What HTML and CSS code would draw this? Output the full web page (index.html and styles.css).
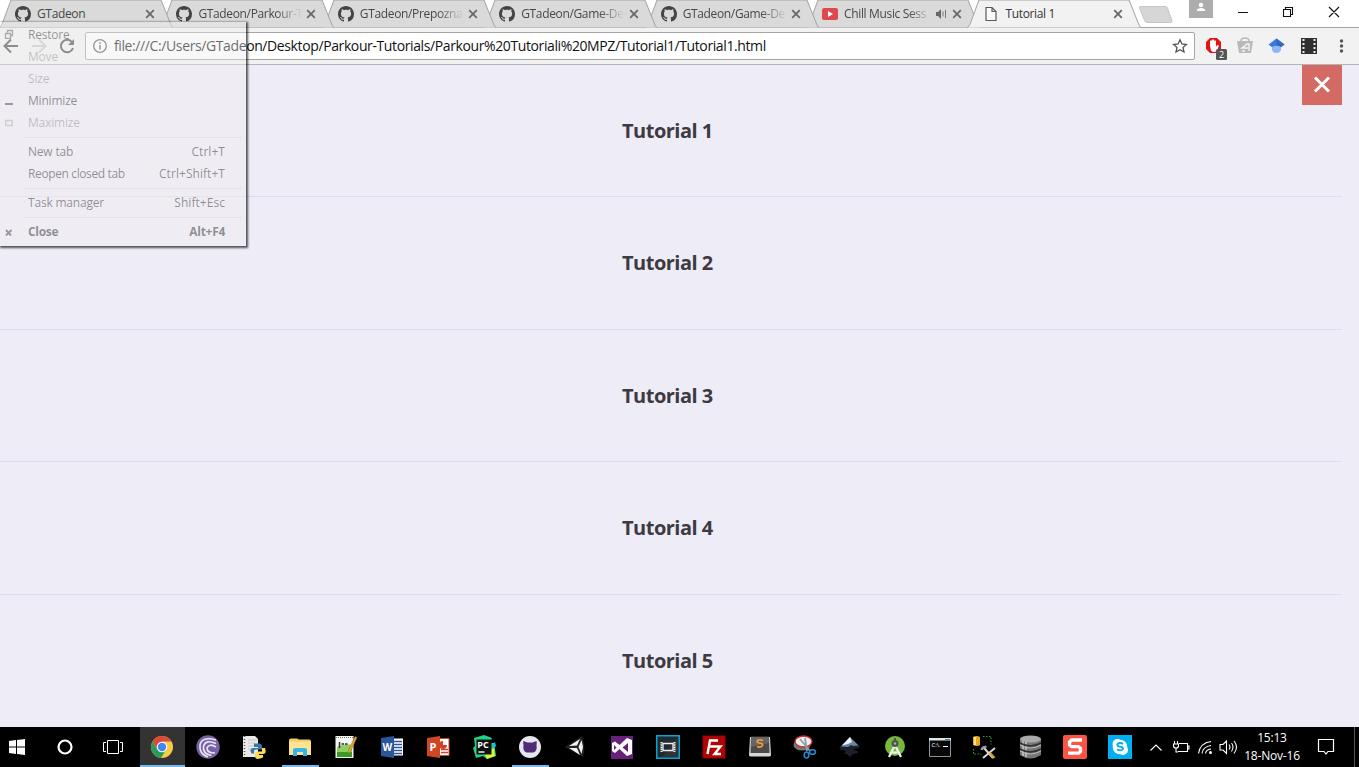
FILE: index.html
```html
<!DOCTYPE html>
<html lang="en">
<head>
<meta charset="utf-8">
<title>Tutorial 1</title>
<link rel="stylesheet" href="styles.css">
</head>
<body>
<svg class="defs" width="0" height="0">
  <symbol id="shape" viewBox="0 0 174 28"><path d="M0 27.5C2 27 2.500 25 3.500 23L12 0H162L172 25Q173 27.500 174 27.500" stroke="#a3a3a3"/></symbol>
  <symbol id="octo" viewBox="0 0 16 16"><path fill="#444" d="M8 0C3.58 0 0 3.58 0 8c0 3.54 2.29 6.53 5.47 7.59.4.07.55-.17.55-.38 0-.19-.01-.82-.01-1.49-2.01.37-2.53-.49-2.69-.94-.09-.23-.48-.94-.82-1.13-.28-.15-.68-.52-.01-.53.63-.01 1.08.58 1.23.82.72 1.21 1.87.87 2.33.66.07-.52.28-.87.51-1.07-1.78-.2-3.64-.89-3.64-3.95 0-.87.31-1.59.82-2.15-.08-.2-.36-1.02.08-2.12 0 0 .67-.21 2.2.82.64-.18 1.32-.27 2-.27.68 0 1.36.09 2 .27 1.53-1.04 2.2-.82 2.2-.82.44 1.1.16 1.92.08 2.12.51.56.82 1.27.82 2.15 0 3.07-1.87 3.75-3.65 3.95.29.25.54.73.54 1.48 0 1.07-.01 1.93-.01 2.2 0 .21.15.46.55.38A8.013 8.013 0 0016 8c0-4.42-3.58-8-8-8z"/></symbol>
  <symbol id="x" viewBox="0 0 10 10"><path d="M1.200 1.200l7.600 7.600M8.800 1.200l-7.600 7.600" stroke="#666" stroke-width="1.700"/></symbol>
</svg>

<header class="browser">
  <div class="strip">
    <div class="tab t0"><svg class="shape"><use href="#shape"/></svg><svg class="fav"><use href="#octo"/></svg><span class="title">GTadeon</span><svg class="close"><use href="#x"/></svg></div>
    <div class="tab t1"><svg class="shape"><use href="#shape"/></svg><svg class="fav"><use href="#octo"/></svg><span class="title fade">GTadeon/Parkour-T</span><svg class="close"><use href="#x"/></svg></div>
    <div class="tab t2"><svg class="shape"><use href="#shape"/></svg><svg class="fav"><use href="#octo"/></svg><span class="title fade">GTadeon/Prepozna</span><svg class="close"><use href="#x"/></svg></div>
    <div class="tab t3"><svg class="shape"><use href="#shape"/></svg><svg class="fav"><use href="#octo"/></svg><span class="title fade">GTadeon/Game-De</span><svg class="close"><use href="#x"/></svg></div>
    <div class="tab t4"><svg class="shape"><use href="#shape"/></svg><svg class="fav"><use href="#octo"/></svg><span class="title fade">GTadeon/Game-De</span><svg class="close"><use href="#x"/></svg></div>
    <div class="tab t5"><svg class="shape"><use href="#shape"/></svg>
      <svg class="fav" viewBox="0 0 16 16"><rect y="2" width="16" height="12" rx="2" fill="#dc4a50"/><path d="M6 5l5 3-5 3z" fill="#fff"/></svg>
      <span class="title fade">Chill Music Sess</span>
      <svg class="audio" viewBox="0 0 11 10"><path d="M0 3h2l3-3v10L2 7H0z" fill="#666"/><path d="M7 2.500v5M9.500 1v8" stroke="#777"/></svg>
      <svg class="close"><use href="#x"/></svg></div>
    <div class="tab active"><svg class="shape"><use href="#shape"/></svg>
      <svg class="fav" viewBox="0 0 16 16"><path d="M3.500 1.500h6l4 4v9h-10zM9.500 1.500v4h4" transform="translate(-.500 0)" fill="#fafafa" stroke="#5a5a5a" stroke-width="1.200"/></svg>
      <span class="title">Tutorial 1</span><svg class="close"><use href="#x"/></svg></div>
    <svg class="newtab" viewBox="0 0 36 18"><path d="M3 .5h24.500q1.500 0 2 1.500l4.500 12.500q.500 2-1.500 2H9q-1.500 0-2.200-1.500L1.500 2Q1 .5 3 .5z" fill="#d6d6d6" stroke="#c6c6c6"/></svg>
    <div class="window">
      <svg class="user" viewBox="0 0 24 18"><path fill="#adadad" d="M0 0h24v18H0z"/><circle cx="12" cy="5" r="2.200" fill="#fff"/><path d="M8 11V9.800Q8.500 8 12 8t4 1.800V11z" fill="#fff"/></svg>
      <svg class="controls" viewBox="0 0 110 24"><path d="M8 12.500h10M53.500 9.500h7v7h-7zM55.500 9.500v-2h7v7h-2M99 7l10 10M109 7L99 17" fill="none" stroke="#111" stroke-width="1.100"/></svg>
    </div>
  </div>
  <div class="toolbar">
    <svg class="nav" viewBox="0 0 85 36"><path d="M18 18H5.500M11 11.500L4.500 18l6.500 6.500" fill="none" stroke="#4e4e4e" stroke-width="2"/><path d="M32 18h12.500M39 11.500l6.500 6.500-6.500 6.500" fill="none" stroke="#c6c6c6" stroke-width="2"/><path d="M72 14.200A6.200 6.200 0 1 0 73 20" fill="none" stroke="#4e4e4e" stroke-width="2"/><path d="M74 11v6h-6z" fill="#4e4e4e"/></svg>
    <div class="address">
      <svg class="info" viewBox="0 0 16 16"><circle cx="8" cy="8" r="6.300" fill="none" stroke="#5e5e5e" stroke-width="1.300"/><path d="M8 7v4.500M8 4.300v1.600" stroke="#5e5e5e" stroke-width="1.500"/></svg>
      <span class="url">file:///C:/Users/GTadeon/Desktop/Parkour-Tutorials/Parkour%20Tutoriali%20MPZ/Tutorial1/Tutorial1.html</span>
      <svg class="star" viewBox="0 0 16 16"><path d="M8 1.800l1.900 4.200 4.500.500-3.400 3 1 4.500L8 11.700 4 14l1-4.500-3.400-3 4.500-.5z" fill="none" stroke="#555" stroke-width="1.300"/></svg>
    </div>
    <svg class="extensions" viewBox="0 0 164 36">
      <path d="M15 10h7l4 4v7l-4 4h-7l-4-4v-7z" fill="#e21414"/><path d="M15 18v-5q1-1.500 2 0v-1q1-1.500 2 0v1q1-1.500 2 0v6l1-2 2 .5-2 5q-3 3-6 0z" fill="#fff"/><rect x="21" y="21" width="11" height="11" rx="1.500" fill="#555"/><text x="24" y="30" font-size="9" fill="#fff">2</text>
      <path d="M42 13h16l-2 12H44z" fill="#b9b9b9"/><path d="M46 13q0-3 4-3t4 3" fill="none" stroke="#b9b9b9" stroke-width="1.500"/><path d="M51 16h3v7M52 16l-5 4h6M47 23h3" fill="none" stroke="#f4f4f4" stroke-width="1.400"/>
      <path d="M81.500 10.500l8 6-8 6-8-6z" fill="#3c78df"/><path d="M81.500 10.500l8 6-8 6z" fill="#3469bd"/><path d="M77 19q4.500-2.500 9 0v3q-1 3-4.500 3T77 22z" fill="#8fb6f5"/>
      <path d="M106 10h16v16h-16z" fill="#303030"/><path d="M108.500 11v14M119.500 11v14" stroke="#ececec" stroke-width="2" stroke-dasharray="2 2"/>
      <g fill="#555"><circle cx="146.500" cy="13" r="1.700"/><circle cx="146.500" cy="18" r="1.700"/><circle cx="146.500" cy="23" r="1.700"/></g>
    </svg>
  </div>
</header>

<main class="page">
  <ul class="lessons">
    <li>Tutorial 1</li><li>Tutorial 2</li><li>Tutorial 3</li><li>Tutorial 4</li><li>Tutorial 5</li>
  </ul>
  <button class="dismiss" aria-label="Close"><svg viewBox="0 0 40 40"><path d="M13 12.500l14 14M27 12.500l-14 14" stroke="#fff" stroke-width="3"/></svg></button>
</main>

<footer class="taskbar">
  <div class="sys first"><svg viewBox="0 0 24 24"><path fill="#fff" d="M4 6l7-1v6.500H4zM12 4.900L20 4v7.500h-8zM4 12.500h7V19l-7-1zM12 12.500h8V20l-8-1z"/></svg></div>
  <div class="sys"><svg viewBox="0 0 24 24"><circle cx="12" cy="12" r="6.500" fill="none" stroke="#fff" stroke-width="2.200"/></svg></div>
  <div class="sys"><svg viewBox="0 0 24 24"><path fill="none" stroke="#fff" d="M6.500 5.500h11v13h-11zM5 7.500H2.500v9H5M19 7.500h2.500v9H19"/></svg></div>
  <div class="apps">
    <div class="app current"><svg viewBox="0 0 24 24"><circle cx="12" cy="12" r="11" fill="#f8cb45"/><path d="M2.500 6.500A11 11 0 0 1 21.500 6.500H12L7 14z" fill="#da4a3c"/><path d="M2.500 6.500A11 11 0 0 0 11 23l5.500-9L7 14z" fill="#2a9b5a"/><circle cx="12" cy="12" r="5.300" fill="#fff"/><circle cx="12" cy="12" r="4.200" fill="#4285f4"/></svg></div>
    <div class="app"><svg viewBox="0 0 24 24"><circle cx="12" cy="12" r="11.700" fill="#7662a5"/><path d="M20 5Q6 1 4 10q-1 9 8 12M20 8.500Q10 4 7.500 11q-1 8 8 9.500M20 12q-7-4-9 1 0 5 8 5" fill="none" stroke="#e9e5f2" stroke-width="1.700"/></svg></div>
    <div class="app"><svg viewBox="0 0 24 24"><path d="M1 1h12l3 3v18H1z" fill="#e9e9e9"/><path d="M2.500 1v21" stroke="#555" stroke-width="1.500" stroke-dasharray="1 2"/><path d="M6 5h9M6 8h7M6 11h6M6 14h4" stroke="#c8c8c8"/><path d="M12 8.500h5q3 0 3 3v3h-6q-2 0-2 2v2H9.500Q7 14 10.500 13H16v-1h-4z" fill="#3878a6"/><path d="M20 13h3q2 6-2 6h-4v1h4v2.500q-7 3-8-.5v-3.500q0-2 3-2h4z" fill="#ffdc52"/></svg></div>
    <div class="app open"><svg viewBox="0 0 24 24"><path d="M1 5q0-1.500 2-1.500h6l2 1h10q2 0 2 2V20H1z" fill="#f2cb68"/><path d="M1 6.500h22V20H1z" fill="#ffe391"/><path d="M5 21v-7l2-1h10l2 1v7h-4v-4H9v4z" fill="#38b5e8"/></svg></div>
    <div class="app"><svg viewBox="0 0 24 24"><path d="M1.500 1h18v22h-18z" fill="#f4f6f1"/><path d="M3 12q8-4 15-2v12H3z" fill="#8fce62"/><path d="M3 17h15v5H3z" fill="#3b9a24"/><path d="M2 2.500h17" stroke="#777" stroke-dasharray="1 1"/><path d="M5.500 7v6M7.500 9h2.500M11 9h2.500" stroke="#333" stroke-width="1.500"/><path d="M21 1.500l2 1-7 15-2 1v-2z" fill="#e5a836" stroke="#8b6522" stroke-width=".5"/></svg></div>
    <div class="app"><svg viewBox="0 0 24 24"><path d="M12 3.500h11v17H12z" fill="#fff"/><path d="M14 6.500h8M14 9.500h8M14 12.500h8M14 15.500h8M14 18.500h8" stroke="#2b579a" stroke-width="1.300"/><path d="M1 3l13-2v22L1 21z" fill="#2b579a"/><text x="2.500" y="16" font-size="10" font-weight="700" fill="#fff">W</text></svg></div>
    <div class="app"><svg viewBox="0 0 24 24"><path d="M12 3.500h11v17H12z" fill="#fff" stroke="#d04525"/><path d="M15 14.500h7M15 17.500h7" stroke="#d04525" stroke-width="1.500"/><path d="M17 6a4 4 0 1 0 4 4h-4z" fill="#d04525"/><path d="M1 3l13-2v22L1 21z" fill="#d04525"/><text x="3.500" y="16" font-size="11" font-weight="700" fill="#fff">P</text></svg></div>
    <div class="app"><svg viewBox="0 0 24 24"><path d="M2 3l10-3 8 3-2 5 4 0 2 13-9 3-4-3-7 2-3-10 2-2z" fill="#20d58a"/><path d="M20 10l3-3 1 4-2 2z" fill="#07c3f2"/><path d="M12 18l10-5 1 8-8 3z" fill="#d8f535"/><path d="M4.500 4.500h15v15h-15z" fill="#111"/><text x="5.300" y="12.500" font-size="9" font-weight="700" fill="#fff">PC</text><path d="M6.500 17h6" stroke="#fff" stroke-width="1.400"/></svg></div>
    <div class="app open"><svg viewBox="0 0 24 24"><circle cx="12" cy="12" r="11" fill="#e6e6ee"/><path d="M5.500 6l4 1.500h5l4-1.500q.5 2 0 4 1 6-3 7.500H8.500Q4.500 16 5.500 10q-.7-2 0-4z" fill="#512c76"/></svg></div>
    <div class="app"><svg viewBox="0 0 24 24"><path d="M1 12L18 1q4 11 1 21z" fill="#222"/><path d="M5 11l11-7-3 6.500zM17.500 5l1.500 7-1.500 7-3-7zM5 13h8l3 7z" fill="#f2f2ef"/></svg></div>
    <div class="app"><svg viewBox="0 0 24 24"><path d="M1 1h22v23H1z" fill="#68217a"/><path d="M2 8l3-1.500 4.500 3.500L17 3l5 2v14l-5 2-7.500-7L5 18l-3-2zM4 10v5l2.500-2.500zM12.500 12.500L18 17V8z" fill="#fff" fill-rule="evenodd"/></svg></div>
    <div class="app"><svg viewBox="0 0 24 24"><path d="M.75.75h22.500v22.500H.75z" fill="#202a30" stroke="#0aa2cf" stroke-width="1.500"/><path d="M22 2v20H6z" fill="#303235"/><path d="M5.500 7v10M18.500 7v10" stroke="#eee" stroke-width="2" stroke-dasharray="1.500 .7"/><path d="M7 8.500h10v7H7z" fill="none" stroke="#eee" stroke-width="1.300"/></svg></div>
    <div class="app"><svg viewBox="0 0 24 24"><path d="M.75.75h22.500v22.500H.75z" fill="#b00507" stroke="#760000" stroke-dasharray="1.500 1"/><path d="M5.500 19L8 5.500h8M6.500 11.500h6M12 11.500h6.500L12.500 19H19" fill="none" stroke="#fff" stroke-width="2.400"/></svg></div>
    <div class="app"><svg viewBox="0 0 24 24"><path d="M2 2h20l1 18q0 1.500-2 1.500H3q-2 0-2-1.500z" fill="#d7d7d7"/><path d="M3 1.500h18l.5 16.500h-19z" fill="#4b4b4b"/><path d="M3 2h18v6L3 12z" fill="#666"/><path d="M15 5.500q-3-1.500-5.500 0-1 2 1.500 2.500 4 0 3.500 2.500-2 2.500-5.500 1" fill="none" stroke="#ff9d35" stroke-width="1.700"/></svg></div>
    <div class="app small"><svg viewBox="0 0 24 24"><ellipse cx="9" cy="10" rx="8.500" ry="5.500" fill="#777"/><ellipse cx="10.500" cy="6.500" rx="8.500" ry="5.500" fill="#f1f1f1" stroke="#c22a2e" stroke-width="1.300"/><path d="M7 4l10 12M12 3l2 13" stroke="#929da5" stroke-width="1.800"/><ellipse cx="13.500" cy="20" rx="2.300" ry="3" fill="none" stroke="#208ad0" stroke-width="1.600"/><ellipse cx="19.500" cy="17" rx="3" ry="2.300" fill="none" stroke="#208ad0" stroke-width="1.600"/></svg></div>
    <div class="app small"><svg viewBox="0 0 24 24"><path d="M12 1.500l10 10q0 1.500-3 2l-4 .5 3 2q3 0 2 2l-5 1-3 3-3-3-3-.5 2-2.500-5-1q-2-1-1-3.500z" fill="#1c222c"/><path d="M12 2l8.500 8.500-5.500.5-2-1-3 2-7-.5z" fill="#6985a4"/><path d="M12 2l2 5-4 2-6 1.500z" fill="#f1f4f7"/></svg></div>
    <div class="app small"><svg viewBox="0 0 24 24"><circle cx="12" cy="11" r="10" fill="#78b83f"/><path d="M12 10L6 22M12 10l6 12M8 16.500q4 2.500 8 0" fill="none" stroke="#eee" stroke-width="2.300"/><circle cx="12" cy="8.500" r="3.500" fill="#4c574e"/><circle cx="12" cy="8.500" r="1.300" fill="#9eb39b"/><path d="M12 3v3" stroke="#4c574e" stroke-width="2"/></svg></div>
    <div class="app small"><svg viewBox="0 0 24 24"><path d="M1.500 3.500h21v18h-21z" fill="#080808" stroke="#8e959a"/><path d="M1 3h22v2.500H1z" fill="#dce5e9"/><path d="M17 4.500h5" stroke="#58849b"/><text x="3.500" y="12" font-size="6" fill="#fff">C:\.</text><path d="M15 11.500h5" stroke="#fff"/></svg></div>
    <div class="app small"><svg viewBox="0 0 24 24"><path d="M0 2q3.500-2 7 0v8q-3 2-7 0z" fill="#e5ac22"/><path d="M2 2v8" stroke="#ffe083" stroke-width="2"/><path d="M10 1.500h8v8M.5 14v5h8" fill="none" stroke="#35a92e" stroke-dasharray="1.500 1.500"/><path d="M11 13l9 10M22 13L10 23" stroke="#d9d9d2" stroke-width="2"/><path d="M17 18l4.500 5" stroke="#cf9d3b" stroke-width="2.500"/><path d="M8.500 15q1-3.500 5-3" fill="none" stroke="#9aa0a5" stroke-width="2.500"/></svg></div>
    <div class="app small"><svg viewBox="0 0 24 24"><path d="M2 4v16q10 7 21 0V4z" fill="#777"/><path d="M5 4v17M8 5v17" stroke="#b5b5b5" stroke-width="2"/><path d="M2 8q10 6 21 0M2 14q10 6 21 0" fill="none" stroke="#303030" stroke-width="1.500"/><path d="M2 10q10 6 21 0M2 16q10 6 21 0" fill="none" stroke="#bcbcbc"/><ellipse cx="12.500" cy="4" rx="10.500" ry="3.500" fill="#aaa"/></svg></div>
    <div class="app small"><svg viewBox="0 0 24 24"><rect width="24" height="24" rx="2" fill="#fb5445"/><path d="M19 5H8.500L6.500 7v3l2 1.700h7l2 1.700v3l-2 1.800H5" fill="none" stroke="#fff" stroke-width="3.300"/></svg></div>
    <div class="app small"><svg viewBox="0 0 24 24"><path fill="#00aff0" d="M0 0h24v24H0z"/><circle cx="9.500" cy="9" r="5" fill="#fff"/><circle cx="15" cy="15" r="5" fill="#fff"/><circle cx="12" cy="12" r="7.300" fill="#fff"/><path d="M15 9q-3-2-5.500 0-1 2 2 2.600 4 .4 3.500 2.400-2 2.500-6 .5" fill="none" stroke="#00aff0" stroke-width="1.900"/></svg></div>
  </div>
  <svg class="tray" viewBox="0 0 96 40"><g fill="none" stroke="#fff" stroke-width="1.100"><path d="M8.500 23.500l5.500-5.500 5.500 5.500"/><path d="M37 16.500h8.500v8H36M45.500 19h1.500v3h-1.500M32.500 14v3M35.500 14v3M31.500 17h5v2q0 2-2.500 2t-2.500-2zM34 21v4h2"/><path d="M56.500 26.500Q58 16 69 14.500M60 26.500q1-7 9-8M63.500 26.500q.5-4 5.500-4.500"/><path d="M78 17.500h3l3.500-3.500v12.500L81 23h-3zM87 17.500q2 2.500 0 5M89.500 16q3 4 0 8.500M92 14q5 6 0 12.500"/></g><circle cx="68.500" cy="25.500" r="1.500" fill="#fff"/></svg>
  <div class="clock"><span>15:13</span><span>18-Nov-16</span></div>
  <svg class="notice" viewBox="0 0 24 40"><path d="M4.500 12.500h15v12H14L12 27l-2-2.500H4.500z" fill="none" stroke="#fff" stroke-width="1.200"/></svg>
  <div class="peek"></div>
</footer>

<nav class="menu">
  <div class="item"><svg viewBox="0 0 10 10"><path d="M1.500 4.500h5v5h-5zM3.500 3.500v-2h5v5H7" fill="none" stroke="#555" stroke-width="1.300"/></svg><span>Restore</span></div>
  <div class="item off"><svg></svg><span>Move</span></div>
  <div class="item off"><svg></svg><span>Size</span></div>
  <div class="item"><svg viewBox="0 0 10 10"><path d="M1 9h8" stroke="#333" stroke-width="2"/></svg><span>Minimize</span></div>
  <div class="item off"><svg viewBox="0 0 10 10"><path d="M1.700 3.500h6.500v5H1.700z" fill="none" stroke="#555" stroke-width="1.500"/></svg><span>Maximize</span></div>
  <hr>
  <div class="item"><svg></svg><span>New tab</span><kbd>Ctrl+T</kbd></div>
  <div class="item"><svg></svg><span class="tight">Reopen closed tab</span><kbd>Ctrl+Shift+T</kbd></div>
  <hr>
  <div class="item"><svg></svg><span>Task manager</span><kbd>Shift+Esc</kbd></div>
  <hr>
  <div class="item strong"><svg viewBox="0 0 10 10"><path d="M2 4l5 5.500M7.500 4L2 9.500" stroke="#333" stroke-width="1.900"/></svg><span>Close</span><kbd>Alt+F4</kbd></div>
</nav>
</body>
</html>
```
FILE: styles.css
```css
* { box-sizing: border-box; }
html, body { height: 100%; }
body { margin: 0; overflow: hidden; display: flex; flex-direction: column; position: relative; font-family: "Open Sans", "Noto Sans", sans-serif; background: #eeecf6; }
svg { display: block; flex: none; }
.defs { position: absolute; }

.browser { flex: none; height: 65px; border-bottom: 1px solid #b3b3ba; background: #f2f2f2; }
.strip { height: 28px; display: flex; background: #fff; border-bottom: 1px solid #a3a3a3; position: relative; }
.tab { position: relative; flex: none; width: 174px; height: 28px; margin-right: -12.6px; display: flex; align-items: center; padding: 0 18px 1px 16px; font-size: 12px; color: #484848; }
.tab:first-child { margin-left: -1px; }
.shape { position: absolute; left: 0; top: 0; width: 174px; height: 28px; fill: #dadada; z-index: -1; }
.t0 { z-index: 7; } .t1 { z-index: 6; } .t2 { z-index: 5; } .t3 { z-index: 4; } .t4 { z-index: 3; } .t5 { z-index: 2; }
.active { z-index: 8; color: #333; }
.active .shape { fill: #f2f2f2; }
.fav { width: 16px; height: 16px; margin-right: 6px; }
.title { flex: 1; overflow: hidden; white-space: nowrap; letter-spacing: -.35px; margin-right: 4px; }
.fade { -webkit-mask-image: linear-gradient(to right, #000 75%, transparent); mask-image: linear-gradient(to right, #000 75%, transparent); }
.close { width: 10px; height: 10px; }
.audio { width: 11px; height: 10px; margin: 0 5px 0 1px; }
.newtab { width: 36px; height: 18px; margin: 6px 0 0 9px; }
.window { margin-left: auto; display: flex; }
.user { width: 24px; height: 18px; }
.controls { width: 110px; height: 24px; margin: 0 19px 0 17px; }

.toolbar { height: 36px; display: flex; align-items: center; }
.nav { width: 85px; height: 36px; }
.address { flex: 1; height: 28px; border: 1px solid #a6a6a6; border-radius: 2px; background: #fff; display: flex; align-items: center; padding: 0 6px; }
.info { width: 16px; height: 16px; margin-right: 6px; }
.url { flex: 1; white-space: nowrap; font-size: 14px; letter-spacing: -.39px; color: #111; padding-bottom: 1px; }
.star { width: 16px; height: 16px; }
.extensions { width: 164px; height: 36px; }

.page { flex: 1; min-height: 0; position: relative; padding-right: 17px; }
.lessons { list-style: none; margin: -.6px 0 0; padding: 0; height: 100%; display: flex; flex-direction: column; }
.lessons li { flex: 1; display: flex; align-items: center; padding-left: 622px; border-bottom: 1px solid #dedced; font-size: 20px; font-weight: 700; letter-spacing: -.5px; color: #3d3a42; }
.lessons li:last-child { border-bottom: 0; }
.dismiss { position: absolute; right: 17px; top: 0; width: 40px; height: 40px; padding: 0; border: 0; background: #d46a64; }

.taskbar { flex: none; height: 40px; background: #000; color: #fff; display: flex; align-items: stretch; }
.taskbar svg { align-self: center; }
.sys { width: 48px; display: flex; justify-content: center; }
.sys svg, .app svg { width: 24px; height: 24px; }
.first { width: 41px; padding-right: 7px; }
.apps { display: flex; margin-left: 2px; }
.app { width: 46px; display: flex; justify-content: center; position: relative; }
.small { width: 45px; }
.small svg { margin-right: 1px; }
.current { background: linear-gradient(#333, #333) 1px 0 / 45px 100% no-repeat; }
.current::after, .open::after { content: ""; position: absolute; bottom: 0; left: 5px; width: 37px; height: 2px; background: #76b9ed; }
.current::after { left: 1px; width: 45px; }
.tray { width: 96px; height: 40px; margin-left: -1px; }
.clock { width: 66px; display: flex; flex-direction: column; align-items: center; font-size: 12px; line-height: 18px; padding-top: 2px; letter-spacing: -.2px; margin-left: 1px; }
.notice { width: 24px; height: 40px; margin-left: 9px; }
.peek { margin-left: auto; width: 5px; border-left: 1px solid #555; }

.menu { position: absolute; z-index: 20; left: 0; top: 22px; width: 246px; height: 224px; padding-top: 2px; background: rgba(240, 238, 241, .4); box-shadow: 1px 1px 2px 1px rgba(0, 0, 0, .65); font-size: 12px; color: rgba(35, 32, 40, .47); }
.item { height: 22px; display: flex; align-items: center; padding: 0 21px 2px 4px; letter-spacing: -.2px; }
.item svg { width: 10px; height: 10px; margin-right: 14px; opacity: .45; }
.item kbd { margin-left: auto; font-family: inherit; letter-spacing: .05px; }
.item .tight { letter-spacing: -.38px; }
.off { color: rgba(35, 32, 40, .25); }
.off svg { opacity: .2; }
.strong { font-weight: 700; }
.strong span, .strong kbd { letter-spacing: -.3px; }
.menu hr { margin: 3px 4px 3px 24px; border: 0; height: 1px; background: #e3e1e9; }
```
